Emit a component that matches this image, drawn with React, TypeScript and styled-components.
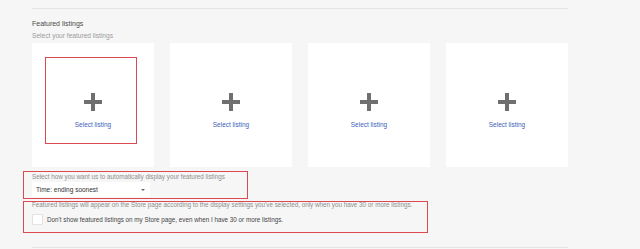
import styled, { createGlobalStyle } from "styled-components";

const GlobalStyle = createGlobalStyle`
  html, body {
    margin: 0;
    padding: 0;
    background: #f6f6f7;
    font-family: "Liberation Sans", Arial, sans-serif;
  }
`;

const slots = [1, 2, 3, 4];

export default function App() {
  return (
    <>
      <GlobalStyle />
      <Page>
        <Divider />
        <Section>
          <Title>Featured listings</Title>
          <Subtitle>Select your featured listings</Subtitle>
          <Cards>
            {slots.map((n) => (
              <Card key={n}>
                {n === 1 && <Highlight $left={13} $top={14} $width={92} $height={87} />}
                <Plus />
                <SelectLink>Select listing</SelectLink>
              </Card>
            ))}
          </Cards>
          <Options>
            <Highlight $left={-9} $top={-2} $width={225} $height={28} />
            <Highlight $left={-9} $top={28} $width={405} $height={32} />
            <Hint>Select how you want us to automatically display your featured listings</Hint>
            <Dropdown>
              <span>Time: ending soonest</span>
              <Caret />
            </Dropdown>
            <Note>
              Featured listings will appear on the Store page according to the display settings
              you've selected, only when you have 30 or more listings.
            </Note>
            <CheckRow>
              <Checkbox />
              <CheckLabel>
                Don't show featured listings on my Store page, even when I have 30 or more listings.
              </CheckLabel>
            </CheckRow>
          </Options>
        </Section>
        <Divider />
      </Page>
    </>
  );
}

const Page = styled.div`
  width: 536px;
  margin-left: 32px;
  padding-top: 8px;
`;

const Divider = styled.div`
  height: 1px;
  background: #e3e3e4;
`;

const Section = styled.div`
  display: flex;
  flex-direction: column;
  padding-top: 10px;
  height: 238px;
  box-sizing: border-box;
`;

const Title = styled.div`
  font-size: 7px;
  line-height: 9px;
  color: #4a4a4a;
`;

const Subtitle = styled.div`
  margin-top: 4px;
  font-size: 6.6px;
  line-height: 8px;
  color: #9a9a9a;
`;

const Cards = styled.div`
  margin-top: 3px;
  display: grid;
  grid-template-columns: repeat(4, 122px);
  column-gap: 16px;
`;

const Card = styled.div`
  position: relative;
  height: 124px;
  background: #fff;
  display: flex;
  flex-direction: column;
  align-items: center;
  padding-top: 50px;
  box-sizing: border-box;
`;

const Highlight = styled.div<{ $left: number; $top: number; $width: number; $height: number }>`
  position: absolute;
  left: ${(p) => p.$left}px;
  top: ${(p) => p.$top}px;
  width: ${(p) => p.$width}px;
  height: ${(p) => p.$height}px;
  border: 1.5px solid #dc4a50;
  box-sizing: border-box;
  pointer-events: none;
`;

const Plus = styled.div`
  position: relative;
  width: 18px;
  height: 18px;
  &::before,
  &::after {
    content: "";
    position: absolute;
    background: #6f6f6f;
  }
  &::before {
    left: 7px;
    top: 0;
    width: 4px;
    height: 18px;
  }
  &::after {
    top: 7px;
    left: 0;
    height: 4px;
    width: 18px;
  }
`;

const SelectLink = styled.div`
  margin-top: 10px;
  font-size: 6.5px;
  color: #3d5fb8;
`;

const Options = styled.div`
  position: relative;
  margin-top: 6px;
  display: flex;
  flex-direction: column;
`;

const Hint = styled.div`
  font-size: 6.3px;
  line-height: 8px;
  color: #8d8d8d;
`;

const Dropdown = styled.div`
  margin-top: 1px;
  width: 118px;
  height: 15px;
  background: #fff;
  display: flex;
  align-items: center;
  justify-content: space-between;
  padding: 0 5px 0 4px;
  box-sizing: border-box;
  font-size: 6.5px;
  color: #333;
`;

const Caret = styled.div`
  width: 0;
  height: 0;
  border-left: 2px solid transparent;
  border-right: 2px solid transparent;
  border-top: 2px solid #666;
`;

const Note = styled.div`
  margin-top: 4px;
  font-size: 6.3px;
  line-height: 8px;
  color: #8d8d8d;
  white-space: nowrap;
`;

const CheckRow = styled.div`
  margin-top: 5px;
  display: flex;
  align-items: center;
  gap: 4px;
`;

const Checkbox = styled.div`
  width: 9px;
  height: 9px;
  background: #fff;
  border: 1px solid #e2e2e2;
  border-radius: 1px;
`;

const CheckLabel = styled.div`
  font-size: 6.3px;
  color: #444;
`;
